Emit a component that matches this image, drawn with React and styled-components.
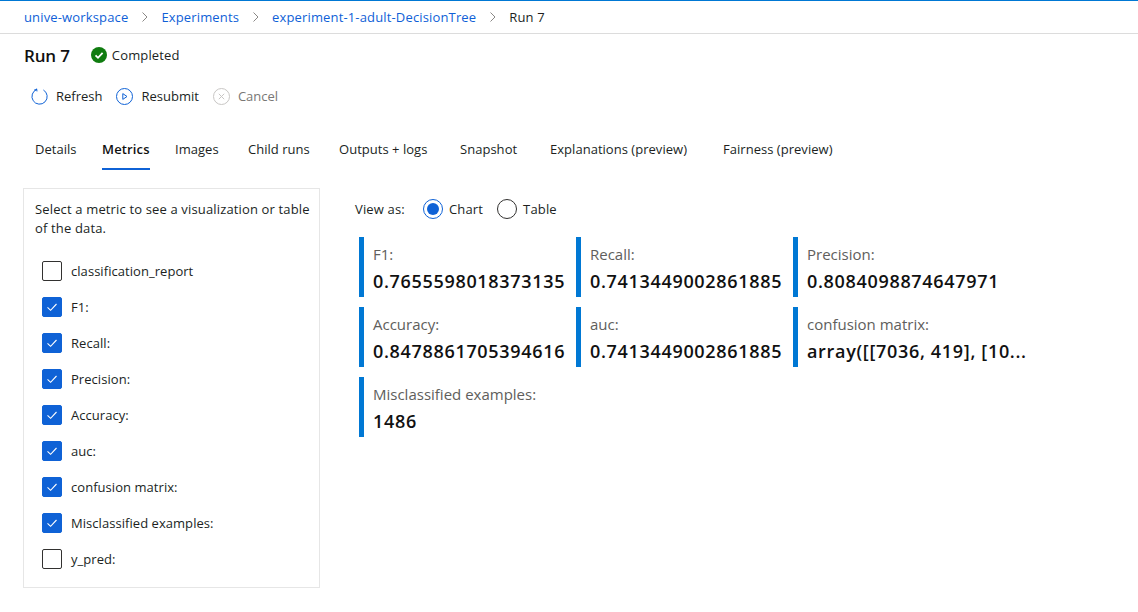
import styled, { createGlobalStyle } from "styled-components";

const GlobalStyle = createGlobalStyle`
  html, body {
    margin: 0;
    padding: 0;
    background: #fff;
    font-family: "Open Sans", "Noto Sans", "Liberation Sans", sans-serif;
    font-size: 13px;
    letter-spacing: 0.15px;
    color: #201f1e;
  }
`;

const Page = styled.div`
  width: 1138px;
  height: 612px;
  overflow: hidden;
  border-top: 1px solid #0078d4;
  box-sizing: border-box;
`;

const Breadcrumb = styled.nav`
  height: 32px;
  padding-left: 24px;
  border-bottom: 1px solid #dcdcdc;
  display: flex;
  align-items: center;
`;

const Crumb = styled.a`
  color: ${(p) => (p.$current ? "#201f1e" : "#0f5fd7")};
`;

const Chevron = styled.svg`
  width: 8px;
  height: 10px;
  margin: 0 12.5px;
  fill: none;
  stroke: #8a8886;
  stroke-width: 1;
`;

const TitleRow = styled.div`
  height: 42px;
  padding-left: 24px;
  display: flex;
  align-items: center;
`;

const Title = styled.h1`
  margin: 0 21px 0 0;
  font-size: 17px;
  font-weight: 600;
  letter-spacing: -0.15px;
  color: #111;
`;

const Status = styled.span`
  display: flex;
  align-items: center;
  gap: 5px;
`;

const Toolbar = styled.div`
  height: 40px;
  padding-left: 31px;
  display: flex;
  align-items: center;
  gap: 14px;
`;

const ToolButton = styled.button`
  border: 0;
  background: none;
  padding: 0;
  display: flex;
  align-items: center;
  gap: 8px;
  font: inherit;
  letter-spacing: 0;
  color: ${(p) => (p.disabled ? "#797775" : "#201f1e")};
`;

const ToolIcon = styled.svg`
  width: 17px;
  height: 17px;
  fill: none;
  stroke: ${(p) => p.$color};
  stroke-width: 1;
`;

const Tabs = styled.div`
  margin-top: 21px;
  height: 48px;
  padding-left: 35px;
  display: flex;
  align-items: flex-start;
`;

const Tab = styled.div`
  width: ${(p) => p.$width}px;
  flex: none;
  padding-top: 3px;
  white-space: nowrap;
`;

const TabLabel = styled.span`
  display: inline-block;
  height: 28px;
  line-height: 18px;
  letter-spacing: ${(p) => (p.$active ? "0.15px" : "0.03px")};
  font-weight: ${(p) => (p.$active ? 600 : 400)};
  color: ${(p) => (p.$active ? "#111" : "#201f1e")};
  border-bottom: 2px solid ${(p) => (p.$active ? "#0f62d6" : "transparent")};
`;

const Content = styled.div`
  margin-top: 3px;
  padding-left: 23px;
  display: flex;
  align-items: flex-start;
`;

const Panel = styled.aside`
  box-sizing: border-box;
  width: 297px;
  height: 400px;
  border: 1px solid #e6e6e6;
  padding: 11px 5px 0 11px;
`;

const Hint = styled.p`
  margin: 0 0 23px;
  line-height: 19px;
`;

const CheckList = styled.div`
  padding-left: 7px;
  display: flex;
  flex-direction: column;
  gap: 16px;
`;

const CheckRow = styled.label`
  display: flex;
  align-items: center;
  gap: 9px;
  height: 20px;
  letter-spacing: 0.05px;
`;

const Box = styled.span`
  box-sizing: border-box;
  width: 20px;
  height: 20px;
  border-radius: 2px;
  display: flex;
  align-items: center;
  justify-content: center;
  background: ${(p) => (p.$checked ? "#0f62d6" : "#fff")};
  border: 1px solid ${(p) => (p.$checked ? "#0f62d6" : "#323130")};
`;

const Main = styled.main`
  margin-left: 35px;
  padding-top: 11px;
`;

const ViewRow = styled.div`
  height: 20px;
  margin-bottom: 18px;
  display: flex;
  align-items: center;
`;

const ViewLabel = styled.span`
  width: 68px;
`;

const RadioOption = styled.label`
  display: flex;
  align-items: center;
  gap: 6px;
  margin-right: 14px;
`;

const Radio = styled.span`
  box-sizing: border-box;
  width: 20px;
  height: 20px;
  border-radius: 50%;
  display: flex;
  align-items: center;
  justify-content: center;
  border: 1px solid ${(p) => (p.$on ? "#0f62d6" : "#323130")};

  &::after {
    content: "";
    width: 12px;
    height: 12px;
    border-radius: 50%;
    background: ${(p) => (p.$on ? "#0f62d6" : "transparent")};
  }
`;

const MetricGrid = styled.div`
  margin-left: 4px;
  display: grid;
  grid-template-columns: 217px 217px 240px;
  grid-auto-rows: 60px;
  row-gap: 10px;
`;

const Metric = styled.div`
  border-left: 5px solid #0078d4;
  padding-left: 9px;
`;

const MetricLabel = styled.div`
  margin-top: 7px;
  height: 20px;
  line-height: 20px;
  font-size: 15px;
  letter-spacing: 0;
  color: #605e5c;
`;

const MetricValue = styled.div`
  margin-top: 5px;
  line-height: 24px;
  font-size: 18px;
  font-weight: 600;
  letter-spacing: 0.68px;
  color: #111;
  white-space: nowrap;
`;

const metricsList = [
  { name: "classification_report", on: false },
  { name: "F1:", on: true },
  { name: "Recall:", on: true },
  { name: "Precision:", on: true },
  { name: "Accuracy:", on: true },
  { name: "auc:", on: true },
  { name: "confusion matrix:", on: true },
  { name: "Misclassified examples:", on: true },
  { name: "y_pred:", on: false },
];

const cards = [
  ["F1:", "0.7655598018373135"],
  ["Recall:", "0.7413449002861885"],
  ["Precision:", "0.8084098874647971"],
  ["Accuracy:", "0.8478861705394616"],
  ["auc:", "0.7413449002861885"],
  ["confusion matrix:", "array([[7036, 419], [10..."],
  ["Misclassified examples:", "1486"],
];

const tabs = [
  ["Details", 67],
  ["Metrics", 73, true],
  ["Images", 73],
  ["Child runs", 91],
  ["Outputs + logs", 121],
  ["Snapshot", 90],
  ["Explanations (preview)", 173],
  ["Fairness (preview)", 120],
];

const Sep = () => (
  <Chevron viewBox="0 0 8 10">
    <path d="M1.5 0.5 L6 5 L1.5 9.5" />
  </Chevron>
);

export default function App() {
  return (
    <Page>
      <GlobalStyle />
      <Breadcrumb>
        <Crumb>unive-workspace</Crumb>
        <Sep />
        <Crumb>Experiments</Crumb>
        <Sep />
        <Crumb>experiment-1-adult-DecisionTree</Crumb>
        <Sep />
        <Crumb $current>Run 7</Crumb>
      </Breadcrumb>

      <TitleRow>
        <Title>Run 7</Title>
        <Status>
          <svg width="16" height="16" viewBox="0 0 16 16">
            <circle cx="8" cy="8" r="8" fill="#107c10" />
            <path d="M4.5 8.3 L7 10.8 L11.6 5.8" fill="none" stroke="#fff" strokeWidth="1.8" />
          </svg>
          Completed
        </Status>
      </TitleRow>

      <Toolbar>
        <ToolButton>
          <ToolIcon viewBox="0 0 17 17" $color="#0f62d6">
            <path d="M6 1.4 A7.6 7.6 0 1 0 12.4 2" />
            <path d="M5.6 0.6 L6 3.4 M3.2 2 L6 1.4" />
          </ToolIcon>
          Refresh
        </ToolButton>
        <ToolButton>
          <ToolIcon viewBox="0 0 17 17" $color="#0f62d6">
            <circle cx="8.5" cy="8.5" r="8" />
            <path d="M6.8 5.6 L11 8.5 L6.8 11.4 Z" />
          </ToolIcon>
          Resubmit
        </ToolButton>
        <ToolButton disabled>
          <ToolIcon viewBox="0 0 17 17" $color="#c8c6c4">
            <circle cx="8.5" cy="8.5" r="8" />
            <path d="M5.8 5.8 L11.2 11.2 M11.2 5.8 L5.8 11.2" />
          </ToolIcon>
          Cancel
        </ToolButton>
      </Toolbar>

      <Tabs>
        {tabs.map(([label, width, active]) => (
          <Tab key={label} $width={width}>
            <TabLabel $active={active}>{label}</TabLabel>
          </Tab>
        ))}
      </Tabs>

      <Content>
        <Panel>
          <Hint>Select a metric to see a visualization or table of the data.</Hint>
          <CheckList>
            {metricsList.map((m) => (
              <CheckRow key={m.name}>
                <Box $checked={m.on}>
                  {m.on && (
                    <svg width="12" height="12" viewBox="0 0 12 12">
                      <path d="M1.5 6.3 L4.6 9.3 L10.5 3" fill="none" stroke="#fff" strokeWidth="1.1" />
                    </svg>
                  )}
                </Box>
                {m.name}
              </CheckRow>
            ))}
          </CheckList>
        </Panel>

        <Main>
          <ViewRow>
            <ViewLabel>View as:</ViewLabel>
            <RadioOption>
              <Radio $on />
              Chart
            </RadioOption>
            <RadioOption>
              <Radio />
              Table
            </RadioOption>
          </ViewRow>
          <MetricGrid>
            {cards.map(([label, value]) => (
              <Metric key={label}>
                <MetricLabel>{label}</MetricLabel>
                <MetricValue>{value}</MetricValue>
              </Metric>
            ))}
          </MetricGrid>
        </Main>
      </Content>
    </Page>
  );
}
